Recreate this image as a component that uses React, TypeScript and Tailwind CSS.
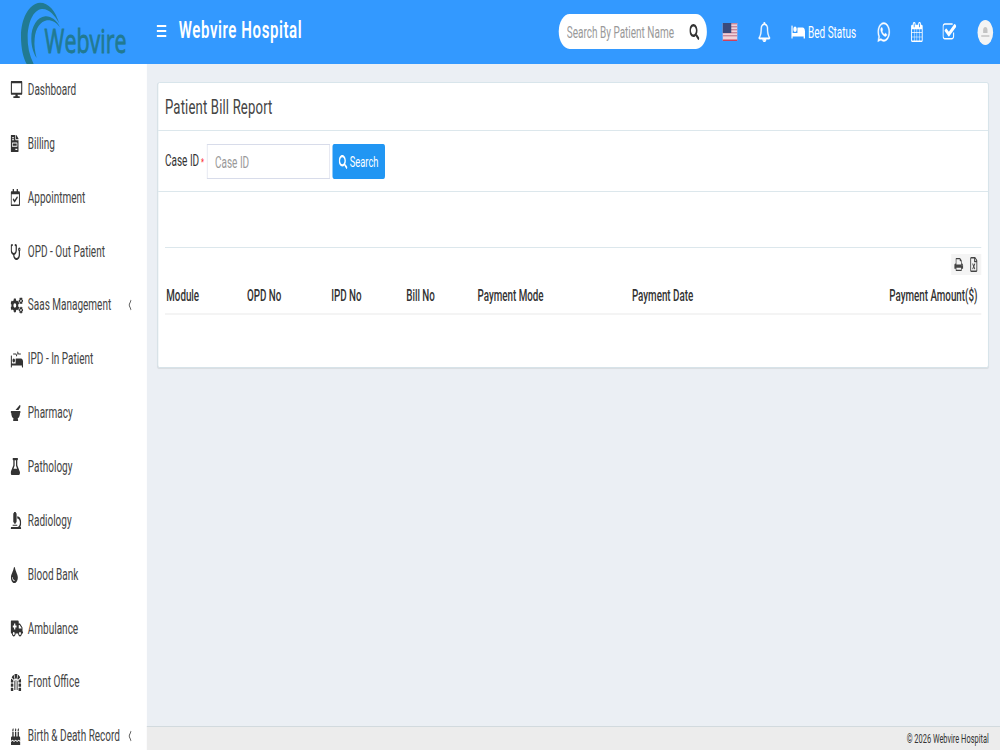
import React from 'react';
import {
  FaAmbulance,
  FaBed,
  FaBirthdayCake,
  FaCogs,
  FaDesktop,
  FaDungeon,
  FaFileInvoice,
  FaFlask,
  FaMicroscope,
  FaMortarPestle,
  FaProcedures,
  FaRegCalendarCheck,
  FaRegFileExcel,
  FaSearch,
  FaStethoscope,
  FaTint,
  FaWhatsapp,
} from 'react-icons/fa';
import { ChevronLeft } from 'lucide-react';

interface MenuItem {
  label: string;
  icon: React.ComponentType<{ className?: string }>;
  iconClass: string;
  expandable?: boolean;
}

const menuItems: MenuItem[] = [
  { label: 'Dashboard', icon: FaDesktop, iconClass: 'w-[19px] h-[17px]' },
  { label: 'Billing', icon: FaFileInvoice, iconClass: 'w-[13px] h-[17px]' },
  { label: 'Appointment', icon: FaRegCalendarCheck, iconClass: 'w-[15px] h-[17px]' },
  { label: 'OPD - Out Patient', icon: FaStethoscope, iconClass: 'w-4 h-4' },
  { label: 'Saas Management', icon: FaCogs, iconClass: 'w-5 h-[17px]', expandable: true },
  { label: 'IPD - In Patient', icon: FaProcedures, iconClass: 'w-5 h-[17px]' },
  { label: 'Pharmacy', icon: FaMortarPestle, iconClass: 'w-4 h-4' },
  { label: 'Pathology', icon: FaFlask, iconClass: 'w-[15px] h-[17px]' },
  { label: 'Radiology', icon: FaMicroscope, iconClass: 'w-[17px] h-[17px]' },
  { label: 'Blood Bank', icon: FaTint, iconClass: 'w-3 h-4' },
  { label: 'Ambulance', icon: FaAmbulance, iconClass: 'w-5 h-[17px]' },
  { label: 'Front Office', icon: FaDungeon, iconClass: 'w-[17px] h-[17px]' },
  { label: 'Birth & Death Record', icon: FaBirthdayCake, iconClass: 'w-[16px] h-[17px]', expandable: true },
];

const columns = [
  { title: 'Module', className: 'w-[129px]' },
  { title: 'OPD No', className: 'w-[135px]' },
  { title: 'IPD No', className: 'w-[120px]' },
  { title: 'Bill No', className: 'w-[114px]' },
  { title: 'Payment Mode', className: 'w-[247px]' },
  { title: 'Payment Date', className: 'flex-1' },
  { title: 'Payment Amount($)', className: 'text-right' },
];

const BellIcon = ({ className }: { className?: string }) => (
  <svg viewBox="0 0 1792 1792" fill="currentColor" className={className}>
    <path d="M912 1696q0-16-16-16-59 0-101.5-42.5t-42.5-101.5q0-16-16-16t-16 16q0 73 51.5 124.5t124.5 51.5q16 0 16-16zm-666-288h1300q-266-300-266-832 0-51-24-105t-69-103-121.5-80.5-169.5-31.5-169.5 31.5-121.5 80.5-69 103-24 105q0 532-266 832zm1482 0q0 52-38 90t-90 38h-448q0 106-75 181t-181 75-181-75-75-181h-448q-52 0-90-38t-38-90q50-42 91-88t85-119.5 74.5-158.5 50-206 19.5-260q0-152 117-282.5t307-158.5q-8-19-8-39 0-40 28-68t68-28 68 28 28 68q0 20-8 39 190 28 307 158.5t117 282.5q0 139 19.5 260t50 206 74.5 158.5 85 119.5 91 88z" />
  </svg>
);

const CalendarIcon = ({ className }: { className?: string }) => (
  <svg viewBox="0 0 1792 1792" fill="currentColor" className={className}>
    <path d="M192 1664h288v-288h-288v288zm352 0h320v-288h-320v288zm-352-352h288v-320h-288v320zm352 0h320v-320h-320v320zm-352-384h288v-288h-288v288zm736 736h320v-288h-320v288zm-384-736h320v-288h-320v288zm768 736h288v-288h-288v288zm-384-352h320v-320h-320v320zm-352-864v-288q0-13-9.5-22.5t-22.5-9.5h-64q-13 0-22.5 9.5t-9.5 22.5v288q0 13 9.5 22.5t22.5 9.5h64q13 0 22.5-9.5t9.5-22.5zm736 864h288v-320h-288v320zm-384-384h320v-288h-320v288zm384 0h288v-288h-288v288zm32-480v-288q0-13-9.5-22.5t-22.5-9.5h-64q-13 0-22.5 9.5t-9.5 22.5v288q0 13 9.5 22.5t22.5 9.5h64q13 0 22.5-9.5t9.5-22.5zm384-64v1280q0 52-38 90t-90 38h-1408q-52 0-90-38t-38-90v-1280q0-52 38-90t90-38h128v-96q0-66 47-113t113-47h64q66 0 113 47t47 113v96h384v-96q0-66 47-113t113-47h64q66 0 113 47t47 113v96h128q52 0 90 38t38 90z" />
  </svg>
);

const CheckIcon = ({ className }: { className?: string }) => (
  <svg viewBox="64 100 1664 1564" fill="currentColor" preserveAspectRatio="none" className={className}>
    <path d="M1472 930v318q0 119-84.5 203.5t-203.5 84.5h-832q-119 0-203.5-84.5t-84.5-203.5v-832q0-119 84.5-203.5t203.5-84.5h832q63 0 117 25 15 7 18 23 3 17-9 29l-49 49q-10 10-23 10-3 0-9-2-23-6-45-6h-832q-66 0-113 47t-47 113v832q0 66 47 113t113 47h832q66 0 113-47t47-113v-254q0-13 9-22l64-64q10-10 23-10 6 0 12 3 20 8 20 29zm231-489l-814 814q-24 24-57 24t-57-24l-430-430q-24-24-24-57t24-57l110-110q24-24 57-24t57 24l263 263 647-647q24-24 57-24t57 24l110 110q24 24 24 57t-24 57z" />
  </svg>
);

const PrintIcon = ({ className }: { className?: string }) => (
  <svg viewBox="0 0 1792 1792" fill="currentColor" className={className}>
    <path d="M448 1536h896v-256h-896v256zm0-640h896v-384h-160q-40 0-68-28t-28-68v-160h-640v640zm1152 64q0-26-19-45t-45-19-45 19-19 45 19 45 45 19 45-19 19-45zm128 0v416q0 13-9.5 22.5t-22.5 9.5h-224v160q0 40-28 68t-68 28h-960q-40 0-68-28t-28-68v-160h-224q-13 0-22.5-9.5t-9.5-22.5v-416q0-79 56.5-135.5t135.5-56.5h64v-544q0-40 28-68t68-28h672q40 0 88 20t76 48l152 152q28 28 48 76t20 88v256h64q79 0 135.5 56.5t56.5 135.5z" />
  </svg>
);

const FlagIcon = ({ className }: { className?: string }) => (
  <svg viewBox="0 0 24 18" preserveAspectRatio="none" className={className}>
    <rect width="24" height="18" fill="#eed3da" />
    {[0, 3, 6, 9, 12].map((y) => (
      <rect key={y} y={y} width="24" height="1.4" fill="#c8889c" />
    ))}
    <rect y="16.5" width="24" height="1.5" fill="#d0405a" />
    <rect width="14" height="10" fill="#3a4a7c" />
  </svg>
);

const Logo = () => (
  <svg viewBox="0 0 441 192" preserveAspectRatio="none" className="h-16 w-[235px] shrink-0">
    <g fill="#217a92">
      <path d="M178 70C166 32 146 8 120 8C86 10 63 58 63 108C63 146 70 174 80 192H101C88 166 82 138 83 108C85 66 99 30 126 27C148 26 164 46 178 70Z" />
      <path d="M180 82C170 60 153 48 136 49C112 51 94 78 94 116C94 140 101 160 110 174C105 154 102 136 104 116C107 84 122 64 141 61C157 60 169 68 180 82Z" />
    </g>
    <text
      x="134"
      y="158"
      fill="#217a92"
      stroke="#217a92"
      strokeWidth="2.5"
      fontSize="98"
      textLength="246"
      lengthAdjust="spacingAndGlyphs"
      fontFamily="'Open Sans', sans-serif"
    >
      Webvire
    </text>
  </svg>
);

const Header = () => (
  <header className="flex h-16 shrink-0 items-center bg-[#3399ff] text-white">
    <Logo />
    <div className="ml-4 flex w-[15px] flex-col gap-[3px] pb-[3px]">
      <span className="h-[2px] bg-white" />
      <span className="h-[2px] bg-white" />
      <span className="h-[2px] bg-white" />
    </div>
    <h1 className="ml-[20px] pb-1 text-[24px] leading-8 font-semibold tracking-[0.95px]">Webvire Hospital</h1>
    <div className="ml-auto flex items-center">
      <div className="mb-[2px] flex h-[35px] w-[237px] items-center rounded-[28px] bg-white pr-3 pl-[13px]">
        <input
          type="text"
          placeholder="Search By Patient Name"
          className="w-[180px] pt-[3px] text-base text-gray-700 outline-none placeholder:text-[#999]"
        />
        <FaSearch className="mt-[2px] ml-auto h-4 w-4 text-[#333]" />
      </div>
      <FlagIcon className="ml-[25px] h-[18px] w-6" />
      <BellIcon className="ml-[33px] h-5 w-5 stroke-white stroke-[50]" />
      <FaBed className="ml-[33px] h-[18px] w-[22px]" />
      <span className="ml-[5px] pt-px text-base">Bed Status</span>
      <FaWhatsapp className="ml-[33px] h-[22px] w-[22px] stroke-white stroke-[12]" />
      <CalendarIcon className="ml-[32px] h-5 w-[20px]" />
      <CheckIcon className="ml-[31px] h-[18px] w-[22px]" />
      <span className="mr-[11px] ml-[34px] flex h-[25px] w-[25px] flex-col items-center justify-center gap-[2px] rounded-full bg-[#f4f4f4]">
        <span className="h-[6px] w-[7px] rounded-t-full bg-[#c4c4c4]" />
        <span className="h-[2px] w-[13px] bg-[#d0d0d0]" />
      </span>
    </div>
  </header>
);

const Sidebar = () => (
  <nav className="w-[235px] shrink-0 overflow-hidden bg-white text-[#444]">
    <div className="-mt-px">
      {menuItems.map(({ label, icon: Icon, iconClass, expandable }) => (
        <a key={label} className="flex h-[53.87px] items-center pr-[21px] pl-[17px] text-base whitespace-nowrap">
          <span className="flex w-[27.5px] shrink-0 items-center text-[#333]">
            <Icon className={iconClass} />
          </span>
          {label}
          {expandable && <ChevronLeft strokeWidth={2} className="ml-auto h-[18px] w-3" preserveAspectRatio="none" />}
        </a>
      ))}
    </div>
  </nav>
);

const BillReport = () => (
  <section className="mt-[18px] mr-[18px] ml-[17px] h-[286px] rounded-[3px] border border-[#d2e0e8] bg-white shadow-[0_1px_1px_rgba(0,0,0,0.08)]">
    <div className="flex h-12 items-center border-b border-[#dce7ec] px-[11px] pt-[3px]">
      <h2 className="text-[21px] tracking-[0.25px] text-[#444]">Patient Bill Report</h2>
    </div>
    <div className="flex h-[61px] items-center border-b border-[#dce7ec] px-[11px]">
      <label className="w-[67px] text-base whitespace-nowrap text-[#333]">
        Case ID<span className="ml-[3px] text-[11px] text-red-500">*</span>
      </label>
      <input
        type="text"
        placeholder="Case ID"
        className="h-[35px] w-[197px] border border-[#d8dcea] px-3 pt-[3px] text-base outline-none placeholder:text-[#999]"
      />
      <button className="ml-1 flex h-[35px] w-[84px] items-center justify-center gap-[3px] rounded-[3px] bg-[#2196f3] pt-[2px] text-[15px] text-white">
        <FaSearch className="h-[14px] w-[14px]" />
        Search
      </button>
    </div>
    <div className="mx-[11px] mt-[55px] border-t border-[#dce7ec] pt-[6px]">
      <div className="ml-auto flex h-[21px] w-[48px] items-center justify-between bg-[#f4f4f4] pr-[5px] pl-1 text-[#444]">
        <PrintIcon className="h-[15px] w-[16px]" />
        <FaRegFileExcel className="h-[15px] w-[14px]" />
      </div>
      <div className="flex h-[40px] items-center border-b-2 border-[#f4f4f4] pt-1 pr-[6px] pl-[2px] text-[15.7px] font-medium text-[#333]">
        {columns.map(({ title, className }) => (
          <div key={title} className={className}>{title}</div>
        ))}
      </div>
    </div>
  </section>
);

// The desktop layout is 1600px wide and is condensed to fit a 1000px window.
export default function App() {
  return (
    <div className="h-[750px] w-[1000px] overflow-hidden">
      <div className="flex h-[750px] w-[1600px] origin-top-left scale-x-[0.625] flex-col font-[Roboto,sans-serif]">
        <Header />
        <div className="flex min-h-0 flex-1">
          <Sidebar />
          <main className="flex flex-1 flex-col bg-[#ebeff4]">
            <BillReport />
            <footer className="mt-auto flex h-6 items-center justify-end border-t border-[#d2dade] bg-[#ececec] pt-[2px] pr-[18px] text-[11.9px] text-[#333]">
              © 2026 Webvire Hospital
            </footer>
          </main>
        </div>
      </div>
    </div>
  );
}
